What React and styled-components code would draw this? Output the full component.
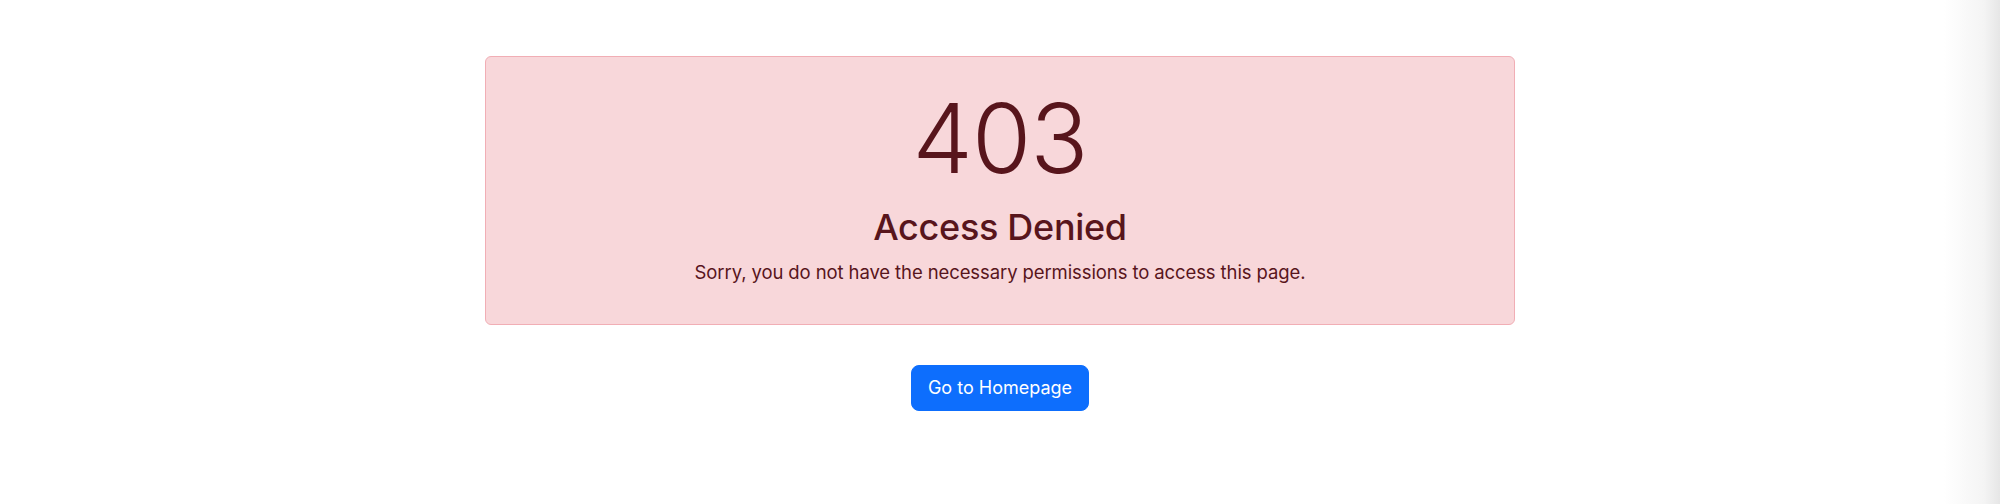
import React from 'react';
import styled, { createGlobalStyle } from 'styled-components';

const GlobalStyle = createGlobalStyle`
  html, body {
    margin: 0;
    padding: 0;
  }
  body {
    min-height: 504px;
    font-family: Inter, "Noto Sans", "Liberation Sans", sans-serif;
    color: #212529;
    background: linear-gradient(to right, #ffffff calc(100% - 56px), #f4f4f4 calc(100% - 16px), #e6e6e6 100%);
  }
`;

const Page = styled.main`
  display: flex;
  flex-direction: column;
  align-items: center;
  padding-top: 56px;
`;

const Alert = styled.section`
  box-sizing: border-box;
  width: 1030px;
  height: 269px;
  padding: 24px 16px 0;
  background-color: #f8d7da;
  border: 1px solid #f1aeb5;
  border-radius: 6px;
  color: #58151c;
  text-align: center;
`;

const Code = styled.h1`
  margin: 0;
  font-size: 96px;
  font-weight: 300;
  line-height: 1.2;
  letter-spacing: -1px;
`;

const Title = styled.h2`
  margin: 10px 0 10px;
  font-size: 36px;
  font-weight: 500;
  line-height: 1.2;
  letter-spacing: -0.3px;
`;

const Message = styled.p`
  margin: 0;
  font-size: 18.5px;
  line-height: 1.5;
  letter-spacing: -0.1px;
`;

const HomeButton = styled.a`
  box-sizing: border-box;
  margin-top: 40px;
  display: inline-block;
  height: 46px;
  padding: 8px 16px;
  font-size: 18px;
  line-height: 28px;
  color: #ffffff;
  background-color: #0d6efd;
  border: 1px solid #0d6efd;
  border-radius: 8px;
  text-decoration: none;
`;

export default function App() {
  return (
    <>
      <GlobalStyle />
      <Page>
        <Alert role="alert">
          <Code>403</Code>
          <Title>Access Denied</Title>
          <Message>Sorry, you do not have the necessary permissions to access this page.</Message>
        </Alert>
        <HomeButton href="#">Go to Homepage</HomeButton>
      </Page>
    </>
  );
}
